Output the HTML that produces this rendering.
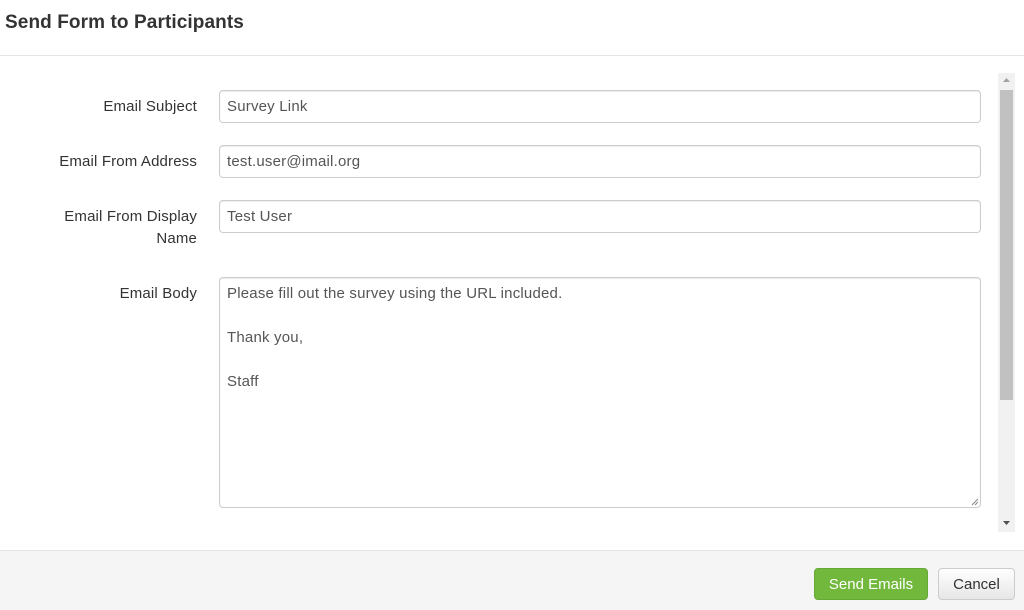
<!DOCTYPE html>
<html><head><style>
*{box-sizing:border-box}
body{margin:0;width:1024px;height:610px;background:#fff;font-family:"Liberation Sans",sans-serif;color:#333;overflow:hidden;position:relative}
.h{position:absolute;left:0;top:0;width:1024px;height:56px;border-bottom:1px solid #e5e5e5}
.h div{position:absolute;left:5px;top:12px;font-size:19px;font-weight:bold;color:#333;letter-spacing:0.1px}
.lbl{position:absolute;right:827px;font-size:15px;text-align:right;color:#333;line-height:22px;letter-spacing:0.15px}
.in{position:absolute;left:219px;width:762px;border:1px solid #ccc;border-radius:4px;font-size:15px;color:#555;padding:0 7px;box-shadow:inset 0 1px 1px rgba(0,0,0,.075);letter-spacing:0.2px}
.sb{position:absolute;left:998px;top:73px;width:17px;height:459px;background:#f1f1f1}
.th{position:absolute;left:1000px;top:90px;width:13px;height:310px;background:#c1c1c1}
.f{position:absolute;left:0;top:550px;width:1024px;height:60px;background:#f5f5f5;border-top:1px solid #e5e5e5}
.b{position:absolute;top:568px;height:32px;border-radius:4px;font-size:15px;text-align:center;line-height:31px}
</style></head><body>
<div class="h"><div>Send Form to Participants</div></div>
<div class="lbl" style="top:96px">Email Subject</div>
<div class="in" style="top:90px;height:33px;line-height:32px">Survey Link</div>
<div class="lbl" style="top:151px">Email From Address</div>
<div class="in" style="top:145px;height:33px;line-height:32px">test.user@imail.org</div>
<div class="lbl" style="top:206px">Email From Display<br>Name</div>
<div class="in" style="top:200px;height:33px;line-height:32px">Test User</div>
<div class="lbl" style="top:283px">Email Body</div>
<div class="in" style="top:277px;height:231px;padding-top:5px;line-height:22px">Please fill out the survey using the URL included.<br><br>Thank you,<br><br>Staff
<svg style="position:absolute;right:1px;bottom:1px" width="8" height="8"><path d="M7 1L1 7M7 4L4 7" stroke="#888" stroke-width="1"/></svg></div>
<div class="sb"></div><div class="th"></div>
<svg style="position:absolute;left:1002px;top:77px" width="9" height="6"><path d="M1 5L4.5 1L8 5Z" fill="#a3a3a3"/></svg>
<svg style="position:absolute;left:1002px;top:520px" width="9" height="6"><path d="M1 1L4.5 5L8 1Z" fill="#505050"/></svg>
<div class="f"></div>
<div class="b" style="left:814px;width:114px;background:#72b83c;border:1px solid #67a836;color:#fff">Send Emails</div>
<div class="b" style="left:938px;width:77px;background:linear-gradient(#fff,#e6e6e6);border:1px solid #ccc;color:#333">Cancel</div>
</body></html>
